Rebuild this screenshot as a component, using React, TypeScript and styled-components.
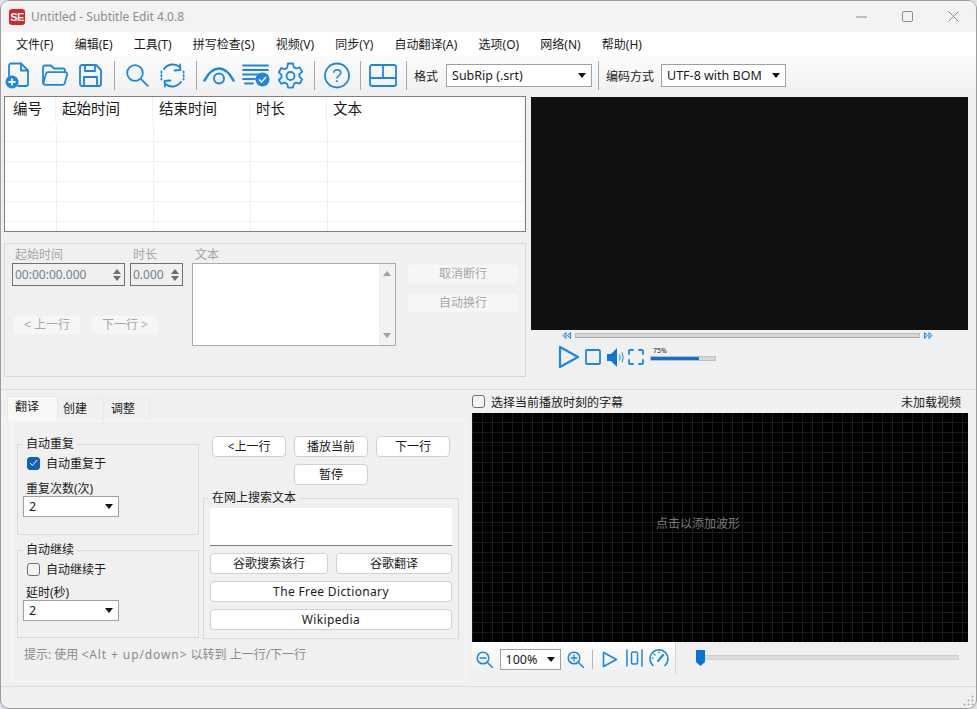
import { createGlobalStyle, styled } from 'styled-components';

const BLUE = '#1c86e0';

const GlobalStyle = createGlobalStyle`
  html, body {
    margin: 0;
    padding: 0;
    background: #dfe3e8;
    overflow: hidden;
  }
  * { box-sizing: border-box; }
`;

const Window = styled.div`
  width: 975px;
  height: 707px;
  margin: 1px;
  border-radius: 8px;
  overflow: hidden;
  background: #f0f0f0;
  box-shadow: 0 0 0 1px #9c9c9c;
  display: flex;
  flex-direction: column;
  font-family: "Noto Sans", "Noto Sans CJK SC", sans-serif;
  font-size: 12px;
  color: #1a1a1a;
`;

const TitleBar = styled.div`
  height: 31px;
  flex: none;
  background: #f3f3f3;
  display: flex;
  align-items: center;
  padding-left: 8px;
`;

const Logo = styled.span`
  width: 16px;
  height: 16px;
  border-radius: 3px;
  background: #d9232b;
  color: #fff;
  font: bold 11px/16px "Liberation Sans", sans-serif;
  letter-spacing: -0.5px;
  text-align: center;
  margin-right: 6px;
`;

const Title = styled.span`
  color: #8c8c8c;
  flex: 1;
`;

const WinButton = styled.span`
  width: 46px;
  height: 31px;
  display: flex;
  align-items: center;
  justify-content: center;
`;

const WinControls = styled.div`
  display: flex;
`;

const MenuBar = styled.div`
  height: 24px;
  flex: none;
  background: #fff;
  display: flex;
  align-items: center;
  gap: 21.2px;
  padding-left: 15px;
`;

const Toolbar = styled.div`
  height: 39px;
  flex: none;
  background: linear-gradient(#fcfcfc, #f0f0f0);
  display: flex;
  align-items: center;
  padding-left: 3px;
`;

const ToolIcon = styled.svg<{ $left?: number; $top?: number }>`
  flex: none;
  display: block;
  margin-left: ${(p) => p.$left ?? 0}px;
  margin-top: ${(p) => p.$top ?? 0}px;
`;

const Sep = styled.span<{ $left: number; $right: number }>`
  width: 1px;
  height: 29px;
  background: #a8a8a8;
  flex: none;
  margin: 0 ${(p) => p.$right}px 0 ${(p) => p.$left}px;
`;

const Combo = styled.div<{ $w: number; $h?: number; $mx?: number }>`
  width: ${(p) => p.$w}px;
  height: ${(p) => p.$h ?? 21}px;
  flex: none;
  margin: 0 ${(p) => p.$mx ?? 0}px;
  background: #fff;
  border: 1px solid #a0a0a0;
  display: flex;
  align-items: center;
  justify-content: space-between;
  padding: 0 5px;
  font-size: 12.5px;
`;

const Caret = styled.span`
  width: 0;
  height: 0;
  border-left: 4.5px solid transparent;
  border-right: 4.5px solid transparent;
  border-top: 5px solid #111;
`;

const ToolLabel = styled.span<{ $right: number }>`
  margin-right: ${(p) => p.$right}px;
  flex: none;
`;

const TopArea = styled.div`
  height: 295px;
  flex: none;
  display: flex;
  padding: 1px 8px 0 3px;
  gap: 5px;
  border-bottom: 1px solid #dcdcdc;
`;

const TopLeft = styled.div`
  width: 522px;
  flex: none;
  display: flex;
  flex-direction: column;
  gap: 11px;
`;

const ListView = styled.div`
  height: 136px;
  flex: none;
  border: 1px solid #7f7f7f;
  background: #fff;
  overflow: hidden;
  display: grid;
  grid-template-columns: 52px 97px 97px 77px 1fr;
  grid-template-rows: 25px;
  grid-auto-rows: 20px;
`;

const ListHeader = styled.div`
  grid-column: 1 / -1;
  height: 25px;
  display: grid;
  grid-template-columns: 51px 97px 97px 77px 1fr;
`;

const ListHead = styled.div`
  font-size: 14.5px;
  line-height: 22px;
  padding-left: 6px;
  border-right: 1px solid #f0f0f0;
  &:first-child { padding-left: 8px; }
`;

const ListCell = styled.div`
  border-right: 1px solid #f0f0f0;
  border-bottom: 1px solid #f0f0f0;
`;

const EditPanel = styled.div`
  height: 134px;
  flex: none;
  border: 1px solid #d8d8d8;
  display: flex;
  padding: 3px 5px 0 7px;
  color: #a6a6a6;
`;

const EditLeft = styled.div`
  width: 172px;
  flex: none;
`;

const EditFields = styled.div`
  display: flex;
  gap: 5px;
`;

const Field = styled.div`
  display: flex;
  flex-direction: column;
`;

const FieldLabel = styled.span`
  height: 16px;
  line-height: 15px;
  padding-left: 3px;
`;

const Spin = styled.div<{ $w: number }>`
  width: ${(p) => p.$w}px;
  height: 23px;
  border: 1px solid #707070;
  color: #6f8194;
  font-size: 12px;
  display: flex;
  align-items: center;
  justify-content: space-between;
  padding: 0 3px 0 2px;
`;

const SpinArrows = styled.span`
  display: flex;
  flex-direction: column;
  gap: 2px;
`;

const Tri = styled.span<{ $up?: boolean; $c?: string }>`
  width: 0;
  height: 0;
  border-left: 4px solid transparent;
  border-right: 4px solid transparent;
  ${(p) => (p.$up ? 'border-bottom' : 'border-top')}: 5px solid ${(p) => p.$c ?? '#6e6e6e'};
`;

const EditNav = styled.div`
  display: flex;
  gap: 10px;
  margin: 29px 0 0 1px;
`;

const Btn = styled.button<{ $w?: number; $h?: number; $off?: boolean; $latin?: boolean }>`
  width: ${(p) => (p.$w ? `${p.$w}px` : '100%')};
  height: ${(p) => p.$h ?? 21}px;
  flex: none;
  padding: 0;
  font: inherit;
  line-height: 1;
  letter-spacing: ${(p) => (p.$latin ? '0.35px' : '0')};
  border-radius: 4px;
  color: ${(p) => (p.$off ? '#a6a6a6' : '#1a1a1a')};
  background: ${(p) => (p.$off ? '#f6f6f6' : '#fff')};
  border: 1px solid ${(p) => (p.$off ? '#f2f2f2' : '#d0d0d0')};
`;

const EditText = styled.div`
  width: 204px;
  margin-left: 8px;
  flex: none;
  display: flex;
  flex-direction: column;
`;

const TextBox = styled.div`
  height: 83px;
  background: #fff;
  border: 1px solid #ababab;
  display: flex;
  justify-content: flex-end;
`;

const ScrollTrack = styled.div`
  width: 16px;
  background: #f2f2f2;
  display: flex;
  flex-direction: column;
  align-items: center;
  justify-content: space-between;
  padding: 7px 0;
`;

const EditButtons = styled.div`
  width: 112px;
  margin: 17px 0 0 11px;
  display: flex;
  flex-direction: column;
  gap: 9px;
`;

const TopRight = styled.div`
  flex: 1;
  display: flex;
  flex-direction: column;
  padding-top: 1px;
`;

const VideoPane = styled.div`
  height: 233px;
  flex: none;
  background: #111;
`;

const Seek = styled.div`
  display: flex;
  align-items: center;
  height: 11px;
  padding-left: 31px;
  gap: 4px;
`;

const SeekTrack = styled.div`
  width: 345px;
  height: 5px;
  background: #d6d6d6;
  border: 1px solid #bdbdbd;
  border-bottom-color: #aaa;
`;

const DoubleArrowSvg = styled.svg<{ $flip?: boolean }>`
  flex: none;
  transform: ${(p) => (p.$flip ? 'scaleX(-1)' : 'none')};
`;

const PlayerRow = styled.div`
  display: flex;
  align-items: center;
  height: 26px;
  margin-top: 3px;
  padding-left: 27px;
`;

const Volume = styled.div`
  width: 66px;
  margin-left: 6px;
  position: relative;
  top: -1px;
`;

const VolumeLabel = styled.div`
  font-size: 7px;
  line-height: 8px;
  height: 8px;
  margin: -5px 0 1px 3px;
`;

const VolumeTrack = styled.div`
  height: 5px;
  background: #d8d8d8;
  border: 1px solid #c0c0c0;
`;

const VolumeFill = styled.div`
  height: 100%;
  background: #0a72d0;
`;

const BottomArea = styled.div`
  height: 297px;
  flex: none;
  display: flex;
  border-bottom: 1px solid #dcdcdc;
`;

const BottomLeft = styled.div`
  width: 470px;
  flex: none;
  display: flex;
  flex-direction: column;
  padding: 6px 0 0 6px;
`;

const TabStrip = styled.div`
  display: flex;
  height: 24px;
  flex: none;
  align-items: flex-end;
`;

const Tab = styled.div<{ $active?: boolean; $w: number; $pad: number }>`
  width: ${(p) => p.$w}px;
  height: ${(p) => (p.$active ? 24 : 22)}px;
  padding-left: ${(p) => p.$pad}px;
  line-height: 20px;
  background: ${(p) => (p.$active ? '#f8f8f8' : '#f0f0f0')};
  border: 1px solid #e8e8e8;
  border-bottom: none;
  border-left-width: ${(p) => (p.$active ? 1 : 0)}px;
`;

const TabPanel = styled.div`
  width: 455px;
  height: 262px;
  margin-left: 4px;
  border: 1px solid #f8f8f8;
  padding: 15px 0 0 5px;
  display: flex;
  flex-direction: column;
`;

const TabColumns = styled.div`
  display: flex;
  gap: 4px;
`;

const Col = styled.div<{ $w: number }>`
  width: ${(p) => p.$w}px;
  flex: none;
  display: flex;
  flex-direction: column;
`;

const Group = styled.fieldset<{ $h: number; $top?: number }>`
  height: ${(p) => p.$h}px;
  margin: ${(p) => p.$top ?? 0}px 0 0;
  padding: 0;
  border: 1px solid #d9d9d9;
  min-width: 0;
`;

const GroupTitle = styled.legend`
  margin-left: 5px;
  padding: 0 3px;
  line-height: 16px;
  font-size: 12px;
`;

const CheckRow = styled.div`
  display: flex;
  align-items: center;
  gap: 6px;
  height: 16px;
`;

const Box = styled.span<{ $on?: boolean }>`
  width: 13px;
  height: 13px;
  flex: none;
  border-radius: 3px;
  background: ${(p) => (p.$on ? '#0f62b8' : '#f4f4f4')};
  border: 1px solid ${(p) => (p.$on ? '#0f62b8' : '#6e6e6e')};
  display: flex;
  align-items: center;
  justify-content: center;
`;

const GroupBody = styled.div`
  padding: 3px 0 0 9px;
`;

const GroupLabel = styled.div<{ $top: number }>`
  margin: ${(p) => p.$top}px 0 0 -1px;
  height: 16px;
  line-height: 16px;
`;

const ComboWrap = styled.div`
  margin: -1px 0 0 -4px;
`;

const ButtonRow = styled.div<{ $pad?: number; $top?: number }>`
  display: flex;
  gap: 8px;
  padding-left: ${(p) => p.$pad ?? 0}px;
  margin-top: ${(p) => p.$top ?? 0}px;
`;

const SearchBody = styled.div`
  padding: 2px 6px 0 6px;
  display: flex;
  flex-direction: column;
  gap: 7px;
`;

const SearchBox = styled.div`
  height: 38px;
  background: #fff;
  border-bottom: 1px solid #7a7a7a;
`;

const Hint = styled.div`
  color: #8a8a8a;
  margin: 7px 0 0 7px;
  line-height: 17px;
`;

const HintKey = styled.span`
  letter-spacing: 0.9px;
`;

const BottomRight = styled.div`
  flex: 1;
  display: flex;
  flex-direction: column;
  padding: 0 8px 0 1px;
`;

const WaveHead = styled.div`
  height: 23px;
  display: flex;
  align-items: center;
  gap: 6px;
  flex: none;
`;

const NoVideo = styled.span`
  margin-left: auto;
  margin-right: 7px;
`;

const WavePane = styled.div`
  height: 229px;
  flex: none;
  background-color: #000;
  background-image:
    linear-gradient(#1b1b1b 1px, transparent 1px),
    linear-gradient(90deg, #1b1b1b 1px, transparent 1px);
  background-size: 10px 10px;
  background-position: 0 9px;
  display: flex;
  align-items: center;
  justify-content: center;
  padding: 0 44px 10px 0;
  color: #7c7c7c;
`;

const WaveBar = styled.div`
  display: flex;
  align-items: flex-start;
  flex: none;
`;

const WaveTools = styled.div`
  width: 204px;
  height: 32px;
  padding: 7px 0 0 4px;
  display: flex;
  align-items: flex-start;
  background: linear-gradient(#fdfdfd, #f0f0f0);
  border-right: 1px solid #d4d4d4;
`;

const WaveSep = styled.span`
  width: 1px;
  height: 19px;
  background: #b8b8b8;
  margin: 1px 9px 0 8px;
  flex: none;
`;

const ZoomSlider = styled.div`
  width: 263px;
  height: 5px;
  margin: 13px 0 0 20px;
  background: #dcdcdc;
  border: 1px solid #d0d0d0;
  position: relative;
`;

const Thumb = styled.span`
  position: absolute;
  left: -1px;
  top: -6px;
  width: 9px;
  height: 16px;
  background: #0a72d0;
  clip-path: polygon(0 0, 100% 0, 100% 75%, 50% 100%, 0 75%);
`;

const StatusBar = styled.div`
  flex: 1;
  display: flex;
  justify-content: flex-end;
  align-items: flex-end;
  padding: 0 2px 2px 0;
`;

const stroke = { fill: 'none', stroke: BLUE, strokeWidth: 1.8, strokeLinejoin: 'round' as const, strokeLinecap: 'round' as const };

const NewIcon = () => (
  <ToolIcon width={26} height={27} viewBox="0 0 26 27" $left={1}>
    <path d="M4 14V3.500a2 2 0 0 1 2-2h10l7 7V22a2 2 0 0 1-2 2H13" {...stroke} />
    <path d="M16 1.500v7h7" {...stroke} />
    <circle cx="7" cy="20" r="6.500" fill={BLUE} />
    <path d="M7 16.500v7M3.500 20h7" stroke="#fff" strokeWidth="1.800" />
  </ToolIcon>
);

const OpenIcon = () => (
  <ToolIcon width={26} height={23} viewBox="0 0 26 23" $left={11}>
    <path d="M1 19V3.500A2 2 0 0 1 3 1.500h6l3 3h9a2 2 0 0 1 2 2V8" {...stroke} />
    <path d="M1.200 19.500 4 9.800A2 2 0 0 1 6 8.200h17.200a2 2 0 0 1 1.900 2.500l-2.400 8.600a2 2 0 0 1-2 1.500H3a2 2 0 0 1-1.800-1.300Z" {...stroke} />
  </ToolIcon>
);

const SaveIcon = () => (
  <ToolIcon width={23} height={23} viewBox="0 0 23 23" $left={11}>
    <path d="M1 3a2 2 0 0 1 2-2h14l5 5v14a2 2 0 0 1-2 2H3a2 2 0 0 1-2-2Z" {...stroke} />
    <path d="M6 1v6h10V1M5 22v-9h13v9" {...stroke} />
  </ToolIcon>
);

const SearchIcon = () => (
  <ToolIcon width={23} height={23} viewBox="0 0 23 23">
    <circle cx="9" cy="9" r="7.800" {...stroke} />
    <path d="m14.800 14.800 7 7" {...stroke} />
  </ToolIcon>
);

const RefreshIcon = () => (
  <ToolIcon width={25} height={25} viewBox="0 0 25 25" $left={11}>
    <path d="M4 6A11 11 0 0 1 20 4.200" {...stroke} strokeWidth={2} />
    <path d="M21 19A11 11 0 0 1 5 20.800" {...stroke} strokeWidth={2} />
    <path d="M14.500 7.500 20.500 7 20 1.500M10.500 17.500 4.500 18l.5 5.500" {...stroke} />
    <path d="M1.400 8.500v8M23.600 8.500v8" {...stroke} strokeDasharray="1.200 2.400" />
  </ToolIcon>
);

const EyeIcon = () => (
  <ToolIcon width={32} height={19} viewBox="0 0 32 19">
    <path d="M1.500 14.500C6 6 11 2.500 16 2.500S26 6 30.500 14.500" {...stroke} strokeWidth={2.600} />
    <circle cx="16" cy="12.500" r="5" {...stroke} strokeWidth={2} />
  </ToolIcon>
);

const ListCheckIcon = () => (
  <ToolIcon width={28} height={23} viewBox="0 0 28 23" $left={7}>
    <path d="M1 1.500h25M1 6h25M1 10.500h21M1 15h12M3 19.500h8" {...stroke} />
    <circle cx="20.500" cy="15.500" r="7" fill={BLUE} />
    <path d="m17 15.500 2.500 2.500 4.500-5" fill="none" stroke="#fff" strokeWidth="1.700" />
  </ToolIcon>
);

const GearIcon = () => (
  <ToolIcon width={27} height={28} viewBox="0 0 27 28" $left={7}>
    <path
      d="M11 1.500h5l.8 3.600 2.400 1.400 3.500-1.100 2.500 4.300-2.700 2.500v2.700l2.700 2.500-2.500 4.300-3.500-1.100-2.400 1.400-.8 3.600h-5l-.8-3.600-2.400-1.400-3.500 1.100L1.800 18l2.700-2.500v-2.700L1.800 10.300l2.500-4.300 3.500 1.100 2.400-1.400Z"
      {...stroke}
    />
    <circle cx="13.500" cy="14" r="4" {...stroke} />
  </ToolIcon>
);

const HelpIcon = () => (
  <ToolIcon width={26} height={27} viewBox="0 0 26 27">
    <circle cx="13" cy="13.500" r="12" {...stroke} />
    <text x="13" y="20" textAnchor="middle" fontFamily="Liberation Sans" fontSize="18" fill={BLUE}>?</text>
  </ToolIcon>
);

const LayoutIcon = () => (
  <ToolIcon width={28} height={23} viewBox="0 0 28 23">
    <rect x="1" y="1" width="26" height="21" rx="2" {...stroke} />
    <path d="M1 14h26M14 1v13" {...stroke} />
  </ToolIcon>
);

const DoubleArrow = ({ right }: { right?: boolean }) => (
  <DoubleArrowSvg width="9" height="7" viewBox="0 0 9 7" $flip={!right}>
    <path d="M.5.5 3.500 3.500.5 6.500ZM5 .5 8 3.500 5 6.500Z" fill="#bcdcf6" stroke={BLUE} strokeWidth="1" />
  </DoubleArrowSvg>
);

const PlayIcon = () => (
  <ToolIcon width={22} height={24} viewBox="0 0 22 24">
    <path d="M2 2 20 12 2 22Z" {...stroke} strokeWidth={2.200} />
  </ToolIcon>
);

const StopIcon = () => (
  <ToolIcon width={16} height={16} viewBox="0 0 16 16" $left={5}>
    <rect x="1" y="1" width="14" height="14" rx="1" {...stroke} />
  </ToolIcon>
);

const SpeakerIcon = () => (
  <ToolIcon width={18} height={19} viewBox="0 0 18 19" $left={6}>
    <path d="M0 6h4l6-6v19l-6-6H0Z" fill="#0a78d8" />
    <path d="M12.500 6.500q1.500 3 0 6M15 4.500q2.500 5 0 10" fill="none" stroke={BLUE} strokeWidth="1" />
  </ToolIcon>
);

const FullIcon = () => (
  <ToolIcon width={16} height={16} viewBox="0 0 16 16" $left={3}>
    <path d="M1 5V2a1 1 0 0 1 1-1h3M11 1h3a1 1 0 0 1 1 1v3M15 11v3a1 1 0 0 1-1 1h-3M5 15H2a1 1 0 0 1-1-1v-3" {...stroke} />
  </ToolIcon>
);

const ZoomGlass = ({ plus }: { plus?: boolean }) => (
  <ToolIcon width={17} height={17} viewBox="0 0 17 17" $top={2}>
    <circle cx="7" cy="7" r="5.800" {...stroke} strokeWidth={1.500} />
    <path d="m11.500 11.500 5 5" {...stroke} strokeWidth={1.500} />
    <path d={plus ? 'M4 7h6M7 4v6' : 'M4 7h6'} {...stroke} strokeWidth={1.300} />
  </ToolIcon>
);

const WavePlayIcon = () => (
  <ToolIcon width={16} height={17} viewBox="0 0 16 17" $top={2}>
    <path d="M1.500 1.500 14.500 8.500 1.500 15.500Z" {...stroke} strokeWidth={1.600} />
  </ToolIcon>
);

const MarkIcon = () => (
  <ToolIcon width={17} height={18} viewBox="0 0 17 18" $left={8}>
    <path d="M1 1v16M16 1v16" {...stroke} strokeWidth={1.500} />
    <rect x="5.500" y="3" width="6" height="12" rx="1.500" {...stroke} strokeWidth={1.500} />
  </ToolIcon>
);

const SpeedIcon = () => (
  <ToolIcon width={20} height={18} viewBox="0 0 20 18" $left={6}>
    <path d="M4 16.500A9 9 0 1 1 16 16.500" {...stroke} strokeWidth={1.600} />
    <path d="m9 12 5-6" {...stroke} strokeWidth={2} />
    <path d="M3 9h1.500M10 2.500V4M5 5l1 1" {...stroke} strokeWidth={1.200} />
  </ToolIcon>
);

const menus = ['文件(F)', '编辑(E)', '工具(T)', '拼写检查(S)', '视频(V)', '同步(Y)', '自动翻译(A)', '选项(O)', '网络(N)', '帮助(H)'];
const columns = ['编号', '起始时间', '结束时间', '时长', '文本'];

const CheckMark = () => (
  <svg width="9" height="8" viewBox="0 0 9 8">
    <path d="m1 4 2.500 2.500L8 1" fill="none" stroke="#fff" strokeWidth="1" />
  </svg>
);

const App = () => {
  return (
    <>
      <GlobalStyle />
      <Window>
        <TitleBar>
          <Logo>SE</Logo>
          <Title>Untitled - Subtitle Edit 4.0.8</Title>
          <WinControls>
            <WinButton>
              <svg width="11" height="2" viewBox="0 0 11 2"><path d="M0 1h11" stroke="#8c8c8c" /></svg>
            </WinButton>
            <WinButton>
              <svg width="11" height="11" viewBox="0 0 11 11"><rect x=".5" y=".5" width="10" height="10" rx="1.500" fill="none" stroke="#8c8c8c" /></svg>
            </WinButton>
            <WinButton>
              <svg width="11" height="11" viewBox="0 0 11 11"><path d="m.5.5 10 10M10.500.5l-10 10" stroke="#8c8c8c" /></svg>
            </WinButton>
          </WinControls>
        </TitleBar>

        <MenuBar>
          {menus.map((m) => <span key={m}>{m}</span>)}
        </MenuBar>

        <Toolbar>
          <NewIcon />
          <OpenIcon />
          <SaveIcon />
          <Sep $left={12} $right={11} />
          <SearchIcon />
          <RefreshIcon />
          <Sep $left={11} $right={6} />
          <EyeIcon />
          <ListCheckIcon />
          <GearIcon />
          <Sep $left={10} $right={9} />
          <HelpIcon />
          <Sep $left={10} $right={8} />
          <LayoutIcon />
          <Sep $left={9} $right={7} />
          <ToolLabel $right={8}>格式</ToolLabel>
          <Combo $w={146} $h={23}>SubRip (.srt)<Caret /></Combo>
          <Sep $left={6} $right={7} />
          <ToolLabel $right={7}>编码方式</ToolLabel>
          <Combo $w={125} $h={23}>UTF-8 with BOM<Caret /></Combo>
        </Toolbar>

        <TopArea>
          <TopLeft>
            <ListView>
              <ListHeader>
                {columns.map((c) => <ListHead key={c}>{c}</ListHead>)}
              </ListHeader>
              {Array.from({ length: 30 }, (_, i) => <ListCell key={i} />)}
            </ListView>

            <EditPanel>
              <EditLeft>
                <EditFields>
                  <Field>
                    <FieldLabel>起始时间</FieldLabel>
                    <Spin $w={113}>00:00:00.000<SpinArrows><Tri $up /><Tri /></SpinArrows></Spin>
                  </Field>
                  <Field>
                    <FieldLabel>时长</FieldLabel>
                    <Spin $w={53}>0.000<SpinArrows><Tri $up /><Tri /></SpinArrows></Spin>
                  </Field>
                </EditFields>
                <EditNav>
                  <Btn $off $w={68} $h={20}>&lt; 上一行</Btn>
                  <Btn $off $w={68} $h={20}>下一行 &gt;</Btn>
                </EditNav>
              </EditLeft>
              <EditText>
                <FieldLabel>文本</FieldLabel>
                <TextBox>
                  <ScrollTrack><Tri $up $c="#a0a0a0" /><Tri $c="#a0a0a0" /></ScrollTrack>
                </TextBox>
              </EditText>
              <EditButtons>
                <Btn $off $h={20}>取消断行</Btn>
                <Btn $off $h={20}>自动换行</Btn>
              </EditButtons>
            </EditPanel>
          </TopLeft>

          <TopRight>
            <VideoPane />
            <Seek>
              <DoubleArrow />
              <SeekTrack />
              <DoubleArrow right />
            </Seek>
            <PlayerRow>
              <PlayIcon />
              <StopIcon />
              <SpeakerIcon />
              <FullIcon />
              <Volume>
                <VolumeLabel>75%</VolumeLabel>
                <VolumeTrack><VolumeFill style={{ width: '75%' }} /></VolumeTrack>
              </Volume>
            </PlayerRow>
          </TopRight>
        </TopArea>

        <BottomArea>
          <BottomLeft>
            <TabStrip>
              <Tab $active $w={51} $pad={7}>翻译</Tab>
              <Tab $w={46} $pad={5}>创建</Tab>
              <Tab $w={46} $pad={7}>调整</Tab>
            </TabStrip>
            <TabPanel>
              <TabColumns>
                <Col $w={182}>
                  <Group $h={99}>
                    <GroupTitle>自动重复</GroupTitle>
                    <GroupBody>
                      <CheckRow><Box $on><CheckMark /></Box>自动重复于</CheckRow>
                      <GroupLabel $top={10}>重复次数(次)</GroupLabel>
                      <ComboWrap><Combo $w={96}>2<Caret /></Combo></ComboWrap>
                    </GroupBody>
                  </Group>
                  <Group $h={96} $top={7}>
                    <GroupTitle>自动继续</GroupTitle>
                    <GroupBody>
                      <CheckRow><Box />自动继续于</CheckRow>
                      <GroupLabel $top={8}>延时(秒)</GroupLabel>
                      <ComboWrap><Combo $w={96}>2<Caret /></Combo></ComboWrap>
                    </GroupBody>
                  </Group>
                </Col>
                <Col $w={256}>
                  <ButtonRow $pad={9}>
                    <Btn $w={74}>&lt;上一行</Btn>
                    <Btn $w={74}>播放当前</Btn>
                    <Btn $w={74}>下一行</Btn>
                  </ButtonRow>
                  <ButtonRow $pad={91} $top={7}>
                    <Btn $w={74}>暂停</Btn>
                  </ButtonRow>
                  <Group $h={149} $top={5}>
                    <GroupTitle>在网上搜索文本</GroupTitle>
                    <SearchBody>
                      <SearchBox />
                      <ButtonRow>
                        <Btn $w={118}>谷歌搜索该行</Btn>
                        <Btn $w={116}>谷歌翻译</Btn>
                      </ButtonRow>
                      <Btn $latin>The Free Dictionary</Btn>
                      <Btn $latin>Wikipedia</Btn>
                    </SearchBody>
                  </Group>
                </Col>
              </TabColumns>
              <Hint>提示: 使用 <HintKey>&lt;Alt + up/down&gt;</HintKey> 以转到 上一行/下一行</Hint>
            </TabPanel>
          </BottomLeft>

          <BottomRight>
            <WaveHead>
              <Box />
              选择当前播放时刻的字幕
              <NoVideo>未加载视频</NoVideo>
            </WaveHead>
            <WavePane>点击以添加波形</WavePane>
            <WaveBar>
              <WaveTools>
                <ZoomGlass />
                <Combo $w={61} $mx={6.500}>100%<Caret /></Combo>
                <ZoomGlass plus />
                <WaveSep />
                <WavePlayIcon />
                <MarkIcon />
                <SpeedIcon />
              </WaveTools>
              <ZoomSlider><Thumb /></ZoomSlider>
            </WaveBar>
          </BottomRight>
        </BottomArea>

        <StatusBar>
          <svg width="11" height="11" viewBox="0 0 11 11">
            <path d="M9 1h1v1H9ZM9 5h1v1H9ZM5 5h1v1H5ZM9 9h1v1H9ZM5 9h1v1H5ZM1 9h1v1H1Z" fill="#a8a8a8" stroke="#a8a8a8" />
          </svg>
        </StatusBar>
      </Window>
    </>
  );
};

export default App;
